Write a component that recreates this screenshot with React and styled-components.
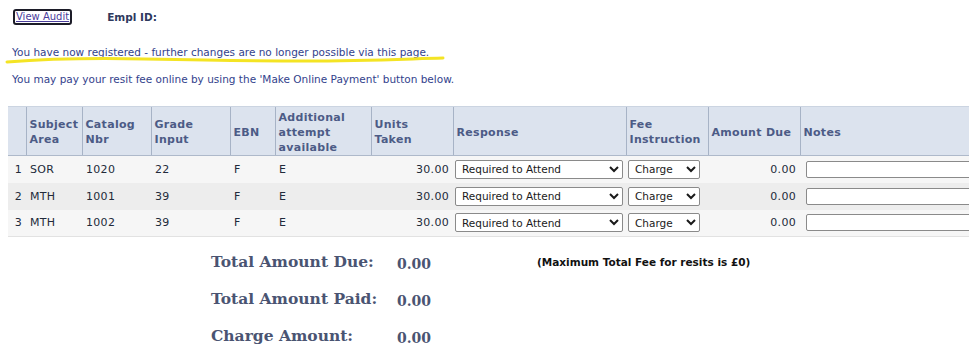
import React from "react";
import styled, { createGlobalStyle } from "styled-components";

const Global = createGlobalStyle`
  html, body { margin: 0; padding: 0; background: #ffffff; overflow: hidden; }
  body { font-family: "DejaVu Sans", Verdana, sans-serif; }
`;

const Page = styled.div`
  width: 969px;
  height: 348px;
  overflow: hidden;
  padding: 8px 0 0 8px;
  box-sizing: border-box;
`;

const TopBar = styled.div`
  display: flex;
  align-items: center;
  height: 17px;
`;

const AuditLink = styled.a`
  display: inline-block;
  margin-left: 5px;
  padding: 0 1px;
  border: 2px solid #1c1c28;
  border-radius: 3px;
  color: #4a3c9c;
  font-size: 10px;
  line-height: 12px;
  text-decoration: underline;
`;

const EmplLabel = styled.span`
  margin-left: 35px;
  color: #2f3a5e;
  font-weight: bold;
  font-size: 10.5px;
`;

const Message = styled.p`
  position: relative;
  margin: ${(p) => p.$top}px 0 0 4px;
  color: #33428c;
  font-size: 10.5px;
  line-height: 13px;
`;

const Highlight = styled.svg`
  position: absolute;
  left: -7px;
  top: 8px;
  width: 440px;
  height: 12px;
  pointer-events: none;
`;

const Table = styled.table`
  border-collapse: collapse;
  table-layout: fixed;
  width: 1080px;
  margin-top: 20px;
  font-size: 11px;
  letter-spacing: 0.3px;
`;

const HeadCell = styled.th`
  background: #dce3ee;
  color: #4c5b86;
  font-weight: bold;
  text-align: left;
  vertical-align: middle;
  padding: 2px 3px 0;
  line-height: 15px;
  height: 46px;
  border-top: 1px solid #cbd4e1;
  border-bottom: 1px solid #aeb9ca;
  border-left: 1px solid #a7b3c6;
  &:first-child { border-left: none; }
`;

const Row = styled.tr`
  background: ${(p) => (p.$alt ? "#ededed" : "#f6f6f6")};
  height: 27px;
  &:last-child td { border-bottom: 1px solid #e2e2e2; }
`;

const Cell = styled.td`
  color: #222a3a;
  padding: 0 4px;
  text-align: ${(p) => (p.$right ? "right" : "left")};
  vertical-align: middle;
  white-space: nowrap;
`;

const Select = styled.select`
  width: ${(p) => p.$w}px;
  height: 19px;
  font-family: "DejaVu Sans", Verdana, sans-serif;
  font-size: 10.5px;
  color: #1a1a1a;
  background: #ffffff;
  border: 1px solid #8a8a8a;
  border-radius: 2px;
  padding: 0 2px;
  margin-left: -2px;
`;

const NoteInput = styled.input`
  width: 200px;
  height: 17px;
  border: 1px solid #8a8a8a;
  border-radius: 2px;
  background: #ffffff;
  margin-left: 2px;
  box-sizing: border-box;
`;

const Totals = styled.div`
  display: grid;
  grid-template-columns: 186px 140px auto;
  grid-auto-rows: 37px;
  align-items: center;
  margin: 6px 0 0 203px;
`;

const TotalLabel = styled.span`
  font-family: "DejaVu Serif", Georgia, serif;
  font-weight: bold;
  font-size: 15.5px;
  color: #4a5472;
`;

const TotalValue = styled.span`
  font-family: "DejaVu Serif", Georgia, serif;
  font-weight: bold;
  font-size: 14px;
  color: #4a5472;
  padding-top: 4px;
`;

const Note = styled.span`
  font-size: 10.5px;
  font-weight: bold;
  color: #111111;
`;

const cols = [18, 56, 69, 79, 45, 96, 82, 173, 82, 92, 288];

const headers = [
  "",
  ["Subject", "Area"],
  ["Catalog", "Nbr"],
  ["Grade", "Input"],
  ["EBN"],
  ["Additional", "attempt", "available"],
  ["Units", "Taken"],
  ["Response"],
  ["Fee", "Instruction"],
  ["Amount Due"],
  ["Notes"],
];

const rows = [
  { n: 1, area: "SOR", nbr: "1020", grade: "22" },
  { n: 2, area: "MTH", nbr: "1001", grade: "39" },
  { n: 3, area: "MTH", nbr: "1002", grade: "39" },
];

export default function App() {
  return (
    <>
      <Global />
      <Page>
        <TopBar>
          <AuditLink href="#">View Audit</AuditLink>
          <EmplLabel>Empl ID:</EmplLabel>
        </TopBar>
        <Message $top={21}>
          You have now registered - further changes are no longer possible via this page.
          <Highlight viewBox="0 0 440 12">
            <path
              d="M2 8 C 40 5, 90 4, 140 5 S 240 7, 300 7 S 400 5, 438 4"
              fill="none"
              stroke="#f4e424"
              strokeWidth="3"
              strokeLinecap="round"
            />
          </Highlight>
        </Message>
        <Message $top={14}>
          You may pay your resit fee online by using the 'Make Online Payment' button below.
        </Message>
        <Table>
          <colgroup>
            {cols.map((w, i) => (
              <col key={i} style={{ width: w }} />
            ))}
          </colgroup>
          <thead>
            <tr>
              {headers.map((h, i) => (
                <HeadCell key={i}>
                  {Array.isArray(h)
                    ? h.map((line, j) => (
                        <React.Fragment key={j}>
                          {j > 0 && <br />}
                          {line}
                        </React.Fragment>
                      ))
                    : h}
                </HeadCell>
              ))}
            </tr>
          </thead>
          <tbody>
            {rows.map((r, i) => (
              <Row key={r.n} $alt={i === 1}>
                <Cell $right>{r.n}</Cell>
                <Cell>{r.area}</Cell>
                <Cell>{r.nbr}</Cell>
                <Cell>{r.grade}</Cell>
                <Cell>F</Cell>
                <Cell>E</Cell>
                <Cell $right>30.00</Cell>
                <Cell>
                  <Select $w={168} defaultValue="req">
                    <option value="req">Required to Attend</option>
                  </Select>
                </Cell>
                <Cell>
                  <Select $w={72} defaultValue="charge">
                    <option value="charge">Charge</option>
                  </Select>
                </Cell>
                <Cell $right>0.00</Cell>
                <Cell>
                  <NoteInput type="text" />
                </Cell>
              </Row>
            ))}
          </tbody>
        </Table>
        <Totals>
          <TotalLabel>Total Amount Due:</TotalLabel>
          <TotalValue>0.00</TotalValue>
          <Note>(Maximum Total Fee for resits is £0)</Note>
          <TotalLabel>Total Amount Paid:</TotalLabel>
          <TotalValue>0.00</TotalValue>
          <span />
          <TotalLabel>Charge Amount:</TotalLabel>
          <TotalValue>0.00</TotalValue>
          <span />
        </Totals>
      </Page>
    </>
  );
}
